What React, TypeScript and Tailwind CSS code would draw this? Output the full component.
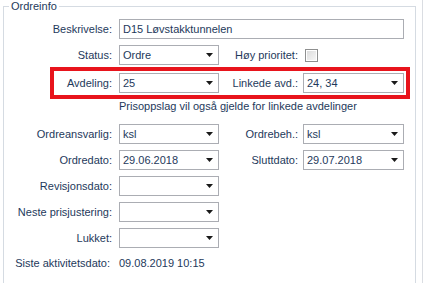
import type { ReactNode } from 'react';

const Arrow = () => (
  <svg width="7" height="4" viewBox="0 0 7 4" className="shrink-0">
    <path d="M0 0 L7 0 L3.5 4 Z" fill="#1a1a1a" />
  </svg>
);

const Combo = ({ value, width }: { value?: string; width: string }) => (
  <div
    className={`${width} h-[20px] flex items-center justify-between border border-[#abadb3] bg-white pl-[3px] pr-[5px]`}
  >
    <span className="text-[#1e395b] leading-none">{value}</span>
    <Arrow />
  </div>
);

const Label = ({ children, width }: { children: ReactNode; width: string }) => (
  <div className={`${width} shrink-0 text-right text-[#1e395b] whitespace-nowrap`}>{children}</div>
);

const Row = ({ children, className = '' }: { children: ReactNode; className?: string }) => (
  <div className={`flex items-center h-[20px] ${className}`}>{children}</div>
);

export default function App() {
  return (
    <div
      className="w-[424px] h-[283px] overflow-hidden bg-white flex text-[11px]"
      style={{ fontFamily: '"Liberation Sans", Arial, sans-serif' }}
    >
      <fieldset className="ml-[3px] w-[413px] h-[300px] shrink-0 border border-[#d5dbe2]">
        <legend className="ml-[5px] px-[2px] leading-[13px] text-[#1e395b]">Ordreinfo</legend>

        <div className="flex flex-col">
          <Row className="mt-[6px]">
            <Label width="w-[108px]">Beskrivelse:</Label>
            <div className="ml-[7px] w-[285px] h-[20px] flex items-center border border-[#abadb3] pl-[3px] text-[#1e395b]">
              D15 Løvstakktunnelen
            </div>
          </Row>

          <Row className="mt-[6px]">
            <Label width="w-[108px]">Status:</Label>
            <div className="ml-[7px]">
              <Combo value="Ordre" width="w-[100px]" />
            </div>
            <Label width="w-[79px]">Høy prioritet:</Label>
            <div className="ml-[7px] w-[13px] h-[13px] border border-[#8e8f8f] p-[1px]">
              <div className="w-full h-full bg-gradient-to-br from-[#dcdcdc] to-[#f6f6f6]" />
            </div>
          </Row>

          <div className="mt-[2px] ml-[46px] w-[360px] h-[32px] border-4 border-[#e8141c] flex items-center">
            <Label width="w-[58px]">Avdeling:</Label>
            <div className="ml-[7px]">
              <Combo value="25" width="w-[100px]" />
            </div>
            <Label width="w-[79px]">Linkede avd.:</Label>
            <div className="ml-[5px]">
              <Combo value="24, 34" width="w-[101px]" />
            </div>
          </div>

          <div className="ml-[115px] h-[14px] leading-[14px] text-[#1e395b]">
            Prisoppslag vil også gjelde for linkede avdelinger
          </div>

          <Row className="mt-[11px]">
            <Label width="w-[108px]">Ordreansvarlig:</Label>
            <div className="ml-[7px]">
              <Combo value="ksl" width="w-[100px]" />
            </div>
            <Label width="w-[79px]">Ordrebeh.:</Label>
            <div className="ml-[5px]">
              <Combo value="ksl" width="w-[101px]" />
            </div>
          </Row>

          <Row className="mt-[6px]">
            <Label width="w-[108px]">Ordredato:</Label>
            <div className="ml-[7px]">
              <Combo value="29.06.2018" width="w-[100px]" />
            </div>
            <Label width="w-[79px]">Sluttdato:</Label>
            <div className="ml-[5px]">
              <Combo value="29.07.2018" width="w-[101px]" />
            </div>
          </Row>

          <Row className="mt-[6px]">
            <Label width="w-[108px]">Revisjonsdato:</Label>
            <div className="ml-[7px]">
              <Combo width="w-[100px]" />
            </div>
          </Row>

          <Row className="mt-[6px]">
            <Label width="w-[108px]">Neste prisjustering:</Label>
            <div className="ml-[7px]">
              <Combo width="w-[100px]" />
            </div>
          </Row>

          <Row className="mt-[6px]">
            <Label width="w-[108px]">Lukket:</Label>
            <div className="ml-[7px]">
              <Combo width="w-[100px]" />
            </div>
          </Row>

          <div className="mt-[8px] flex h-[14px] leading-[14px]">
            <Label width="w-[106px]">Siste aktivitetsdato:</Label>
            <div className="ml-[9px] text-[#1e395b]">09.08.2019 10:15</div>
          </div>
        </div>
      </fieldset>
      <div className="ml-[6px] w-px h-full bg-[#dadde2]" />
    </div>
  );
}
